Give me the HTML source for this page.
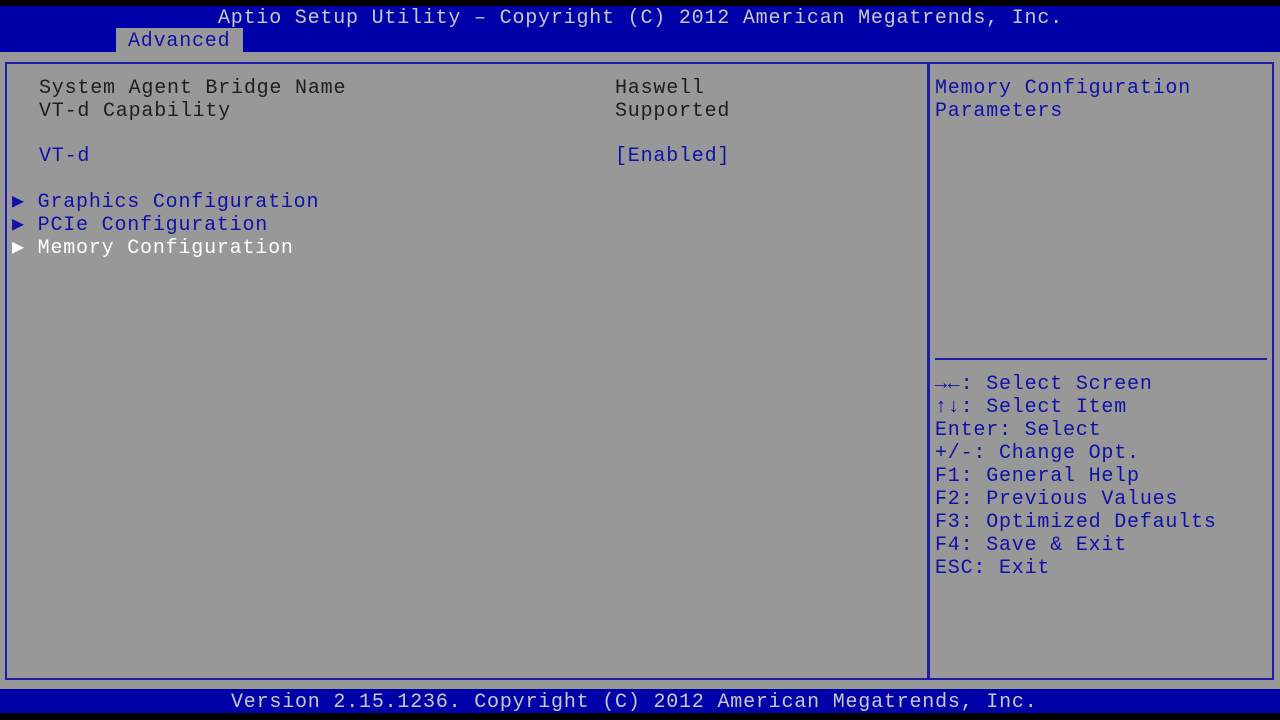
<!DOCTYPE html>
<html><head><style>
body{margin:0;width:1280px;height:720px;background:#000;overflow:hidden;position:relative;font-family:"Liberation Mono",monospace;font-size:20px;letter-spacing:0.8px}
.t{position:absolute;white-space:pre;line-height:23px}
#hdr{position:absolute;left:0;top:6px;width:1280px;height:46px;background:#0000a8}
#main{position:absolute;left:0;top:52px;width:1280px;height:637px;background:#989898}
#ftr{position:absolute;left:0;top:689px;width:1280px;height:24px;background:#0000a8}
.box{position:absolute;border:2px solid #1c1ca8}
.g{color:#1e1e1e}.b{color:#1010a8}.w{color:#fff}.l{color:#c8c8c8}
</style></head><body>
<div id="hdr"></div>
<div class="t l" style="left:218px;top:7px">Aptio Setup Utility – Copyright (C) 2012 American Megatrends, Inc.</div>
<div style="position:absolute;left:116px;top:28px;width:127px;height:24px;background:#989898"></div>
<div class="t b" style="left:128px;top:30px">Advanced</div>
<div id="main"></div>
<div class="box" style="left:5px;top:62px;width:921px;height:614px"></div>
<div class="box" style="left:927px;top:62px;width:343px;height:614px"></div>
<div style="position:absolute;left:935px;top:358px;width:332px;height:2px;background:#1c1ca8"></div>
<div class="t g" style="left:39px;top:77px">System Agent Bridge Name
VT-d Capability</div>
<div class="t g" style="left:615px;top:77px">Haswell
Supported</div>
<div class="t b" style="left:39px;top:145px">VT-d</div>
<div class="t b" style="left:615px;top:145px">[Enabled]</div>
<div class="t b" style="left:12px;top:191px">▶ Graphics Configuration
▶ PCIe Configuration</div>
<div class="t w" style="left:12px;top:237px">▶ Memory Configuration</div>
<div class="t b" style="left:935px;top:77px">Memory Configuration
Parameters</div>
<div class="t b" style="left:935px;top:373px">→←: Select Screen
↑↓: Select Item
Enter: Select
+/-: Change Opt.
F1: General Help
F2: Previous Values
F3: Optimized Defaults
F4: Save &amp; Exit
ESC: Exit</div>
<div id="ftr"></div>
<div class="t l" style="left:231px;top:691px">Version 2.15.1236. Copyright (C) 2012 American Megatrends, Inc.</div>
</body></html>
